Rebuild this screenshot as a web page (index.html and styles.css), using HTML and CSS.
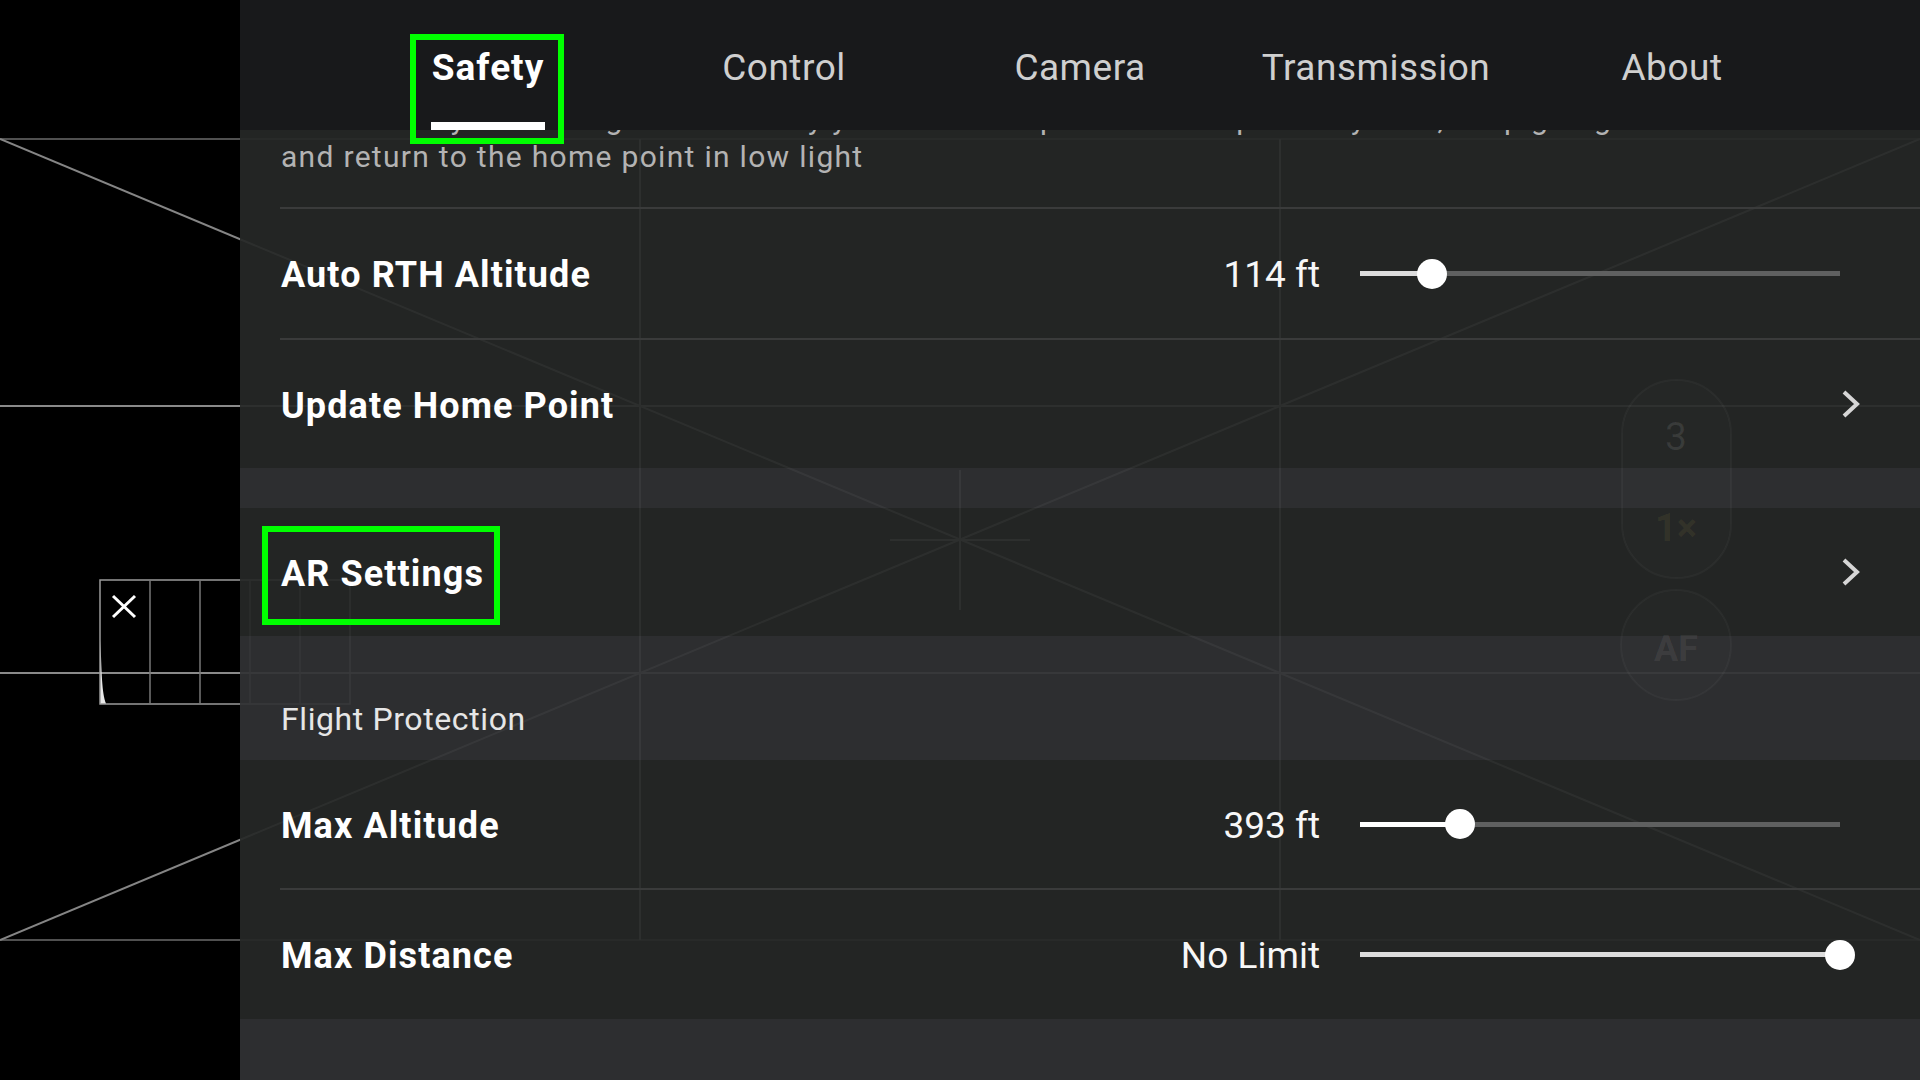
FILE: index.html
```html
<!DOCTYPE html>
<html lang="en">
<head>
<meta charset="utf-8">
<title>Safety Settings</title>
<link rel="stylesheet" href="styles.css">
</head>
<body>
<div class="screen">
  <svg class="camera" width="1920" height="1080" viewBox="0 0 1920 1080" xmlns="http://www.w3.org/2000/svg">
    <g fill="none" stroke-width="2">
      <line x1="0" y1="139" x2="1920" y2="139" stroke="#505050"/>
      <line x1="0" y1="940" x2="1920" y2="940" stroke="#505050"/>
      <line x1="0" y1="406" x2="1920" y2="406" stroke="#8a8a8a"/>
      <line x1="0" y1="673" x2="1920" y2="673" stroke="#8a8a8a"/>
      <line x1="640" y1="139" x2="640" y2="940" stroke="#8a8a8a"/>
      <line x1="1280" y1="139" x2="1280" y2="940" stroke="#8a8a8a"/>
      <line x1="0" y1="139" x2="1920" y2="940" stroke="#858585"/>
      <line x1="0" y1="940" x2="1920" y2="139" stroke="#858585"/>
      <line x1="890" y1="540" x2="1030" y2="540" stroke="#8a8a8a"/>
      <line x1="960" y1="470" x2="960" y2="610" stroke="#8a8a8a"/>
    </g>
    <g class="histogram">
      <rect x="100" y="580" width="250" height="124" fill="none" stroke="#9a9a9a" stroke-width="1.5"/>
      <line x1="150" y1="580" x2="150" y2="704" stroke="#777" stroke-width="1.5"/>
      <line x1="200" y1="580" x2="200" y2="704" stroke="#777" stroke-width="1.5"/>
      <line x1="250" y1="580" x2="250" y2="704" stroke="#777" stroke-width="1.5"/>
      <line x1="300" y1="580" x2="300" y2="704" stroke="#777" stroke-width="1.5"/>
      <path d="M100.5 640 C101.5 672 102 694 106 703.5 L100.5 703.5 Z" fill="#e8e8e8"/>
      <line x1="113" y1="596" x2="135" y2="617" stroke="#ffffff" stroke-width="3"/>
      <line x1="135" y1="596" x2="113" y2="617" stroke="#ffffff" stroke-width="3"/>
    </g>
  </svg>

  <div class="app">
    <div class="cam-side"></div>
    <main class="panel">
      <nav class="tabs">
        <div class="tab active"><span class="tab-label">Safety</span></div>
        <div class="tab"><span class="tab-label">Control</span></div>
        <div class="tab"><span class="tab-label">Camera</span></div>
        <div class="tab"><span class="tab-label">Transmission</span></div>
        <div class="tab"><span class="tab-label">About</span></div>
      </nav>

      <div class="content">
        <section class="group">
          <div class="desc">
            <p class="desc-text"><span class="desc-line">The auxiliary bottom light turns on by yourself to help the aircraft precisely land, keep going</span><span class="desc-line">and return to the home point in low light</span></p>
          </div>
          <div class="row row-tall sep">
            <span class="label">Auto RTH Altitude</span>
            <span class="value">114 ft</span>
            <div class="slider">
              <div class="track"><div class="fill" style="width:14.9%"></div></div>
              <div class="thumb" style="left:14.9%"></div>
            </div>
          </div>
          <div class="row">
            <span class="label">Update Home Point</span>
            <svg class="chev" width="19" height="30" viewBox="0 0 19 30"><polyline points="3,3 16,15 3,27" fill="none" stroke="#d6d6d6" stroke-width="4"/></svg>
          </div>
        </section>

        <div class="band gap"></div>

        <section class="group">
          <div class="row">
            <span class="label">AR Settings</span>
            <svg class="chev" width="19" height="30" viewBox="0 0 19 30"><polyline points="3,3 16,15 3,27" fill="none" stroke="#d6d6d6" stroke-width="4"/></svg>
          </div>
        </section>

        <div class="band section-title">Flight Protection</div>

        <section class="group">
          <div class="row sep">
            <span class="label">Max Altitude</span>
            <span class="value">393 ft</span>
            <div class="slider">
              <div class="track"><div class="fill fill-bright" style="width:20.8%"></div></div>
              <div class="thumb" style="left:20.8%"></div>
            </div>
          </div>
          <div class="row row-tall">
            <span class="label">Max Distance</span>
            <span class="value">No Limit</span>
            <div class="slider">
              <div class="track"><div class="fill" style="width:100%"></div></div>
              <div class="thumb" style="left:100%"></div>
            </div>
          </div>
        </section>

        <div class="band filler"></div>
      </div>
    </main>
  </div>

  <svg class="pill-overlay" width="130" height="340" viewBox="1610 370 130 340" xmlns="http://www.w3.org/2000/svg">
    <rect x="1622" y="380" width="109" height="198" rx="54" fill="rgba(255,255,255,0.012)" stroke="rgba(255,255,255,0.035)" stroke-width="2"/>
    <circle cx="1676" cy="645" r="55" fill="rgba(255,255,255,0.012)" stroke="rgba(255,255,255,0.035)" stroke-width="2"/>
    <text x="1676" y="450" text-anchor="middle" class="pill-num">3</text>
    <text x="1676" y="541" text-anchor="middle" class="pill-zoom">1×</text>
    <text x="1676" y="661" text-anchor="middle" class="pill-af">AF</text>
  </svg>

  <div class="annot annot-safety"></div>
  <div class="annot annot-ar"></div>
</div>
</body>
</html>
```

FILE: styles.css
```css
html, body {
  margin: 0;
  padding: 0;
  width: 1920px;
  height: 1080px;
  overflow: hidden;
  background: #000;
}

body {
  font-family: Roboto, "Noto Sans", "Liberation Sans", sans-serif;
}

.screen {
  position: relative;
  width: 1920px;
  height: 1080px;
}

.camera {
  position: absolute;
  left: 0;
  top: 0;
}

/* faint zoom / focus control seen through the panel */
.pill-overlay {
  position: absolute;
  left: 1610px;
  top: 370px;
  pointer-events: none;
}

.pill-num {
  font-family: Roboto, sans-serif;
  font-size: 39px;
  fill: rgba(255, 255, 255, 0.09);
}

.pill-zoom {
  font-family: Roboto, sans-serif;
  font-size: 38px;
  font-weight: 700;
  fill: rgba(255, 215, 90, 0.075);
}

.pill-af {
  font-family: Roboto, sans-serif;
  font-size: 36px;
  font-weight: 700;
  fill: rgba(255, 255, 255, 0.075);
}

.app {
  position: relative;
  display: flex;
  width: 1920px;
  height: 1080px;
}

.cam-side {
  flex: none;
  width: 240px;
}

.panel {
  flex: 1;
  min-width: 0;
  display: flex;
  flex-direction: column;
}

/* Tabs */
.tabs {
  flex: none;
  height: 130px;
  background: #18191b;
  display: flex;
  padding: 0 100px;
}

.tab {
  flex: 1;
  display: flex;
  justify-content: center;
}

.tab-label {
  position: relative;
  display: flex;
  align-items: center;
  height: 130px;
  box-sizing: border-box;
  padding-top: 4px;
  font-size: 37px;
  letter-spacing: 0.5px;
  color: #cfcfcf;
  white-space: nowrap;
}

.tab.active .tab-label {
  color: #ffffff;
  font-weight: 700;
  letter-spacing: 1px;
}

.tab.active .tab-label::after {
  content: "";
  position: absolute;
  left: -1px;
  right: -1px;
  bottom: 0;
  height: 8px;
  background: #ffffff;
}

/* Content */
.content {
  flex: 1;
  min-height: 0;
  overflow: hidden;
  display: flex;
  flex-direction: column;
}

.group {
  flex: none;
  background: rgba(38, 40, 39, 0.93);
}

.band {
  background: rgba(48, 49, 52, 0.93);
}

.gap {
  flex: none;
  height: 40px;
}

.filler {
  flex: 1;
}

.desc {
  display: flow-root;
  margin-left: 40px;
  padding-bottom: 31px;
  border-bottom: 2px solid #3a3b3b;
}

.desc-text {
  margin: -30px 0 0 1px;
  font-size: 30px;
  line-height: 38px;
  letter-spacing: 1.3px;
  color: #b3b3b3;
}

.desc-line {
  display: block;
  white-space: nowrap;
}

.row {
  margin-left: 40px;
  height: 128px;
  display: flex;
  align-items: center;
}

.row-tall {
  height: 129px;
}

.sep {
  border-bottom: 2px solid #3a3b3b;
}

.label {
  flex: 1;
  padding: 3px 0 0 1px;
  font-size: 36px;
  font-weight: 700;
  letter-spacing: 1.1px;
  color: #ffffff;
  white-space: nowrap;
}

.value {
  padding-top: 2px;
  font-size: 37px;
  letter-spacing: 0px;
  color: #f7f7f7;
  white-space: nowrap;
}

.slider {
  position: relative;
  flex: none;
  width: 480px;
  height: 30px;
  margin-left: 40px;
  margin-right: 80px;
  display: flex;
  align-items: center;
}

.track {
  position: relative;
  width: 100%;
  height: 5px;
  background: #5f6060;
}

.fill {
  height: 100%;
  background: #dcdcdc;
}

.fill-bright {
  background: #ffffff;
}

.thumb {
  position: absolute;
  top: 50%;
  width: 30px;
  height: 30px;
  border-radius: 50%;
  background: #ffffff;
  transform: translate(-50%, -50%);
}

.chev {
  flex: none;
  margin-right: 60px;
}

.section-title {
  flex: none;
  height: 124px;
  box-sizing: border-box;
  padding: 64px 0 0 41px;
  font-size: 32px;
  letter-spacing: 0.6px;
  color: #e6e6e6;
  white-space: nowrap;
}

/* Highlight annotations */
.annot {
  position: absolute;
  box-sizing: border-box;
  border: 6px solid #00ff00;
}

.annot-safety {
  left: 410px;
  top: 34px;
  width: 154px;
  height: 110px;
}

.annot-ar {
  left: 262px;
  top: 526px;
  width: 238px;
  height: 99px;
}
```
